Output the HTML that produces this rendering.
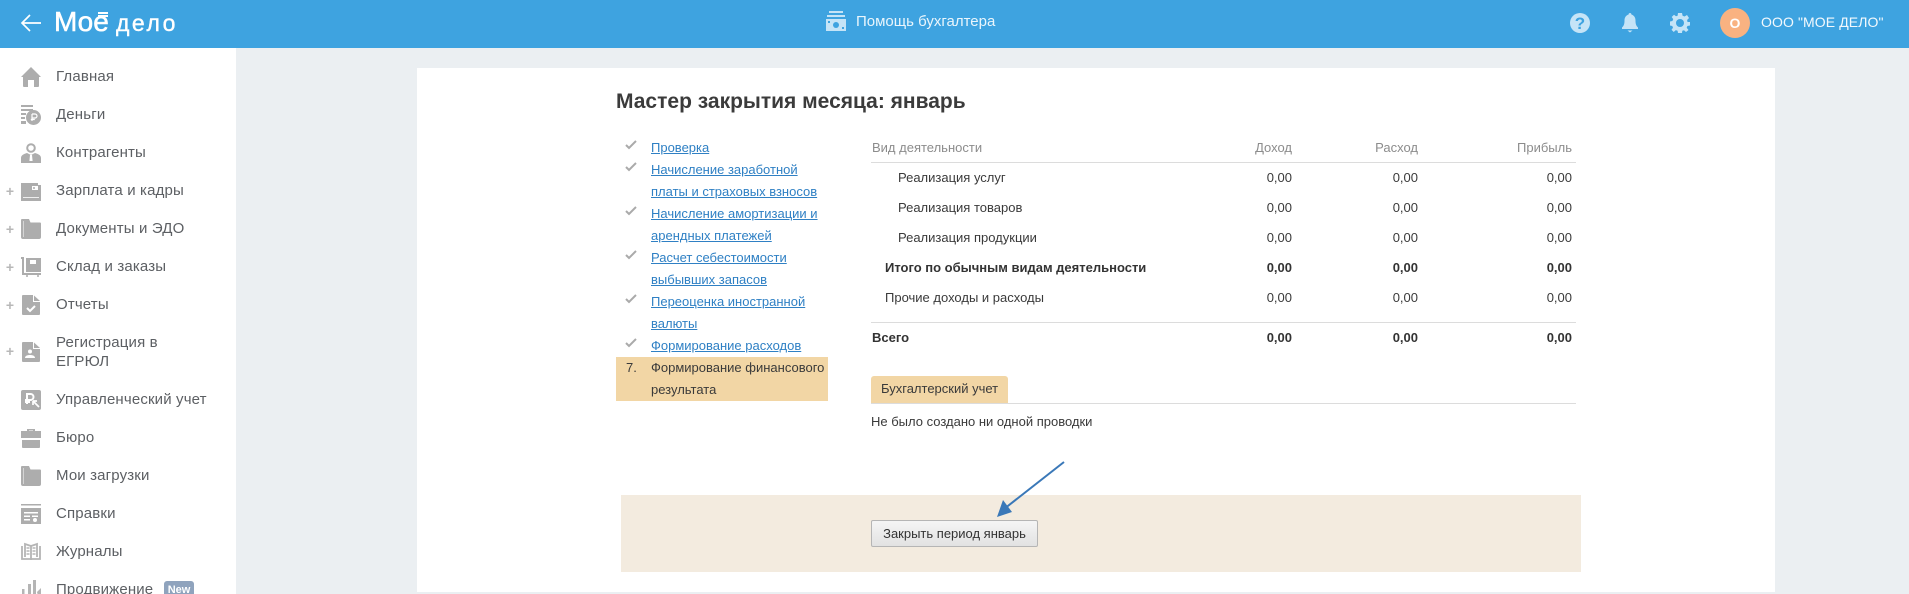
<!DOCTYPE html>
<html lang="ru"><head><meta charset="utf-8"><title>Мастер закрытия месяца</title>
<style>
html,body{margin:0;padding:0;width:1909px;height:594px;overflow:hidden}
#w{position:relative;width:1909px;height:594px;overflow:hidden;background:#ebeff2;font-family:"Liberation Sans",sans-serif;font-size:13px;color:#3a3a3a}
.a{position:absolute;white-space:nowrap}
#top{left:0;top:0;width:1909px;height:48px;background:#3ea3e0}
#side{left:0;top:48px;width:236px;height:546px;background:#fff}
#panel{left:417px;top:68px;width:1358px;height:524px;background:#fff}
.n{left:56px;font-size:15px;line-height:19px;color:#5c5f63;letter-spacing:.15px;height:19px}
.i{left:21px;width:20px;height:20px}
.p{left:4px;font-size:14px;font-weight:bold;color:#b8b8b8;line-height:16px;width:12px;height:16px;text-align:center}
.k{left:625px}
.l{left:651px;color:#2f80c4;text-decoration:underline;line-height:22px;font-size:13px}
.t{line-height:16px;height:16px}
.r{text-align:right;width:120px;line-height:16px;height:16px}
.h{color:#8c8c8c}
.b{font-weight:bold;color:#333}
.hr{background:#dcdcdc;height:1px;left:871px;width:705px}
</style></head><body><div id="w">
<div id="top" class="a"></div>
<div id="side" class="a"></div>
<div id="panel" class="a"></div>

<!-- header -->
<svg class="a" style="left:20px;top:13px" width="22" height="20" viewBox="0 0 22 20"><path d="M21 10H2M10 2L2 10l8 8" fill="none" stroke="#fff" stroke-width="1.7"/></svg>
<div class="a" style="left:54px;top:6px;font-size:28px;line-height:32px;color:#fff;-webkit-text-stroke:.5px #fff">Мое</div>
<div class="a" style="left:98px;top:12px;width:10px;height:2px;background:#fff"></div>
<div class="a" style="left:98px;top:15px;width:10px;height:2px;background:#fff"></div>
<div class="a" style="left:116px;top:9px;font-size:23px;line-height:28px;color:#fff;letter-spacing:2.500px;-webkit-text-stroke:.4px #fff">дело</div>

<svg class="a" style="left:826px;top:11px" width="20" height="20" viewBox="0 0 20 20"><rect x="3" y="0" width="14" height="2" fill="#c5e4f7"/><rect x="1" y="4" width="18" height="2" fill="#c5e4f7"/><path d="M0 8h20v12H0z" fill="#c5e4f7"/><circle cx="10" cy="14" r="3" fill="#3ea3e0"/><rect x="2" y="10" width="2" height="2" fill="#3ea3e0"/><rect x="16" y="16" width="2" height="2" fill="#3ea3e0"/></svg>
<div class="a" style="left:856px;top:13px;font-size:15px;line-height:18px;color:#e9f5fc">Помощь бухгалтера</div>

<svg class="a" style="left:1570px;top:13px" width="20" height="20" viewBox="0 0 20 20"><circle cx="10" cy="10" r="10" fill="#c5e4f7"/><text x="10" y="16" text-anchor="middle" font-family="Liberation Sans" font-size="17" font-weight="bold" fill="#3ea3e0">?</text></svg>
<svg class="a" style="left:1622px;top:13px" width="16" height="20" viewBox="0 0 16 20"><path d="M8 0c1 0 1.400.7 1.400 1.500C12 2.300 13.500 4.500 13.500 7.500c0 3.500.7 5.500 2.500 7V16H0v-1.500c1.800-1.500 2.500-3.500 2.500-7 0-3 1.500-5.200 4.100-6C6.600.7 7 0 8 0z" fill="#c5e4f7"/><path d="M5.500 17.500h5L8 19.500z" fill="#c5e4f7"/></svg>
<svg class="a" style="left:1670px;top:13px" width="20" height="20" viewBox="0 0 20 20"><path d="M8 0h4l.6 2.700 1.900.8L17 2l2 3-1.900 2 .4 2H20v3.500l-2.600.5-.7 1.800L18.500 17 16 19l-2-1.800-1.700.6L12 20H8l-.4-2.200-1.800-.7L3.700 19 1.500 16.800 3 14.800l-.7-1.800L0 12.500V8.500L2.400 8l.8-1.900L1.700 4 4 1.800l2 1.500 1.600-.6z" fill="#c5e4f7"/><circle cx="10" cy="10" r="4" fill="#3ea3e0"/></svg>
<div class="a" style="left:1720px;top:8px;width:30px;height:30px;border-radius:50%;background:#f9b281;color:#fff;font-weight:bold;font-size:14px;line-height:30px;text-align:center">О</div>
<div class="a" style="left:1761px;top:13px;font-size:14px;line-height:18px;color:#f3f9fd;letter-spacing:.1px">ООО "МОЕ ДЕЛО"</div>

<!-- sidebar -->
<div class="a n" style="top:67px">Главная</div>
<div class="a n" style="top:105px">Деньги</div>
<div class="a n" style="top:143px">Контрагенты</div>
<div class="a n" style="top:181px">Зарплата и кадры</div>
<div class="a n" style="top:219px">Документы и ЭДО</div>
<div class="a n" style="top:257px">Склад и заказы</div>
<div class="a n" style="top:295px">Отчеты</div>
<div class="a n" style="top:333px">Регистрация в</div>
<div class="a n" style="top:352px">ЕГРЮЛ</div>
<div class="a n" style="top:390px">Управленческий учет</div>
<div class="a n" style="top:428px">Бюро</div>
<div class="a n" style="top:466px">Мои загрузки</div>
<div class="a n" style="top:504px">Справки</div>
<div class="a n" style="top:542px">Журналы</div>
<div class="a n" style="top:580px">Продвижение</div>
<div class="a" style="left:164px;top:581px;width:30px;height:18px;border-radius:3px;background:#8fa3bd;color:#fff;font-size:11px;font-weight:bold;line-height:18px;text-align:center">New</div>

<div class="a p" style="top:183px">+</div>
<div class="a p" style="top:221px">+</div>
<div class="a p" style="top:259px">+</div>
<div class="a p" style="top:297px">+</div>
<div class="a p" style="top:343px">+</div>

<svg class="a i" style="top:67px" viewBox="0 0 20 20" fill="#adadad"><path d="M10 0L20 10h-2v9a1 1 0 0 1-1 1h-4v-7H7v7H3a1 1 0 0 1-1-1v-9H0z"/></svg>
<svg class="a i" style="top:105px" viewBox="0 0 20 20" fill="#adadad"><path d="M0 0h12v2H0zM0 4h12v2H0zM0 8h5v2H0zM0 12h4v2H0zM0 16h5v3H0z"/><circle cx="12.500" cy="12.500" r="7.500"/><path d="M11 9h3a2 2 0 0 1 0 4h-3M11 9v7M9.800 14.500h4" fill="none" stroke="#fff" stroke-width="1.200"/></svg>
<svg class="a i" style="top:143px" viewBox="0 0 20 20" fill="#adadad"><circle cx="10" cy="5" r="3.800" fill="none" stroke="#adadad" stroke-width="2"/><path d="M0 20v-5c0-3 3-4 6-5l4 2 4-2c3 1 6 2 6 5v5z"/><path d="M9 12h2l.6 6H8.400z" fill="#fff"/></svg>
<svg class="a i" style="top:181px" viewBox="0 0 20 20" fill="#adadad"><path d="M0 2h17v2h3v16H0z"/><path d="M2 16h16v.8H2z" fill="#fff"/><path d="M11 5h6v4h-6z" fill="#fff"/><circle cx="13" cy="7" r="1"/></svg>
<svg class="a i" style="top:219px" viewBox="0 0 20 20" fill="#adadad"><path d="M1 0h7l1.500 3.500H19a1 1 0 0 1 1 1V18a2 2 0 0 1-2 2H2a2 2 0 0 1-2-2V1a1 1 0 0 1 1-1z"/><path d="M2 2h.7v16H2z" fill="#e6e6e6"/></svg>
<svg class="a i" style="top:257px" viewBox="0 0 20 20" fill="#adadad"><path d="M0 0h3v16h17v2H1V2H0z"/><path d="M5 1h15v14H5z"/><path d="M9 3h6v4H9z" fill="#fff"/><circle cx="6" cy="19" r="1"/><circle cx="17" cy="19" r="1"/></svg>
<svg class="a i" style="top:295px" viewBox="0 0 20 20" fill="#adadad"><path d="M2 0h10v7h7v12a1 1 0 0 1-1 1H2a1 1 0 0 1-1-1V1a1 1 0 0 1 1-1z"/><path d="M13 .5L19 6h-6z"/><path d="M6 13l3 3 5-5" fill="none" stroke="#fff" stroke-width="2"/></svg>
<svg class="a i" style="top:342px" viewBox="0 0 20 20" fill="#adadad"><path d="M2 0h10v7h7v12a1 1 0 0 1-1 1H2a1 1 0 0 1-1-1V1a1 1 0 0 1 1-1z"/><path d="M13 .5L19 6h-6z"/><circle cx="9" cy="9.500" r="2" fill="#fff"/><path d="M4 16c0-2 2-3 5-3s5 1 5 3z" fill="#fff"/></svg>
<svg class="a i" style="top:390px" viewBox="0 0 20 20" fill="#adadad"><rect width="20" height="20" rx="2"/><path d="M6 14V4h3.500a3 3 0 0 1 0 6H4M4 12h5" fill="none" stroke="#fff" stroke-width="2"/><path d="M12 11l6 6M12 11h4M12 11v4" fill="none" stroke="#fff" stroke-width="1.700"/></svg>
<svg class="a i" style="top:428px" viewBox="0 0 20 20" fill="#adadad"><path d="M6 3V1h8v2h6v7H0V3zM8 2.500V3h4v-.500z"/><path d="M1 12h18v7a1 1 0 0 1-1 1H2a1 1 0 0 1-1-1z"/></svg>
<svg class="a i" style="top:466px" viewBox="0 0 20 20" fill="#adadad"><path d="M1 0h7l1.500 3.500H19a1 1 0 0 1 1 1V18a2 2 0 0 1-2 2H2a2 2 0 0 1-2-2V1a1 1 0 0 1 1-1z"/><path d="M2 2h.7v16H2z" fill="#e6e6e6"/></svg>
<svg class="a i" style="top:504px" viewBox="0 0 20 20" fill="#adadad"><path d="M0 0h20v1.500H0zM0 4h20v16H0z"/><path d="M3 8h14v1.500H3zM3 11.500h6V13H3zM3 15h6v1.500H3zM11 11.500h6V13h-6z" fill="#fff"/><circle cx="14" cy="16" r="2" fill="#fff"/></svg>
<svg class="a i" style="top:542px" viewBox="0 0 20 20" fill="none" stroke="#b5b5b5" stroke-width="1.800"><path d="M1 4v13h18V4M4 15V2l6 2 6-2v13M10 4v14"/><path d="M5.500 6h3M5.500 9h3M5.500 12h3M11.500 6h3M11.500 9h3M11.500 12h3" stroke-width="1.500"/></svg>
<svg class="a i" style="top:580px" viewBox="0 0 20 20" fill="#b5b5b5"><path d="M1 9h2.500v8H1zM7 4h3v13H7zM12 0h3v17h-3zM16 12l4-4v8h-3z"/></svg>

<!-- main -->
<div class="a" style="left:616px;top:90px;font-size:21px;line-height:24px;font-weight:bold;color:#3b3b3b">Мастер закрытия месяца: январь</div>

<svg class="a k" style="top:140px" width="12" height="10" viewBox="0 0 12 10"><path d="M1 5l3 3 7-7" fill="none" stroke="#aaa" stroke-width="2"/></svg>
<svg class="a k" style="top:162px" width="12" height="10" viewBox="0 0 12 10"><path d="M1 5l3 3 7-7" fill="none" stroke="#aaa" stroke-width="2"/></svg>
<svg class="a k" style="top:206px" width="12" height="10" viewBox="0 0 12 10"><path d="M1 5l3 3 7-7" fill="none" stroke="#aaa" stroke-width="2"/></svg>
<svg class="a k" style="top:250px" width="12" height="10" viewBox="0 0 12 10"><path d="M1 5l3 3 7-7" fill="none" stroke="#aaa" stroke-width="2"/></svg>
<svg class="a k" style="top:294px" width="12" height="10" viewBox="0 0 12 10"><path d="M1 5l3 3 7-7" fill="none" stroke="#aaa" stroke-width="2"/></svg>
<svg class="a k" style="top:338px" width="12" height="10" viewBox="0 0 12 10"><path d="M1 5l3 3 7-7" fill="none" stroke="#aaa" stroke-width="2"/></svg>

<div class="a l" style="top:137px">Проверка</div>
<div class="a l" style="top:159px">Начисление заработной</div>
<div class="a l" style="top:181px">платы и страховых взносов</div>
<div class="a l" style="top:203px">Начисление амортизации и</div>
<div class="a l" style="top:225px">арендных платежей</div>
<div class="a l" style="top:247px">Расчет себестоимости</div>
<div class="a l" style="top:269px">выбывших запасов</div>
<div class="a l" style="top:291px">Переоценка иностранной</div>
<div class="a l" style="top:313px">валюты</div>
<div class="a l" style="top:335px">Формирование расходов</div>

<div class="a" style="left:616px;top:357px;width:212px;height:44px;background:#f2d6a5"></div>
<div class="a" style="left:626px;top:357px;line-height:22px">7.</div>
<div class="a" style="left:651px;top:357px;line-height:22px">Формирование финансового</div>
<div class="a" style="left:651px;top:379px;line-height:22px">результата</div>

<!-- table -->
<div class="a t h" style="left:872px;top:140px">Вид деятельности</div>
<div class="a r h" style="left:1172px;top:140px">Доход</div>
<div class="a r h" style="left:1298px;top:140px">Расход</div>
<div class="a r h" style="left:1452px;top:140px">Прибыль</div>
<div class="a hr" style="top:162px"></div>

<div class="a t" style="left:898px;top:170px">Реализация услуг</div>
<div class="a r" style="left:1172px;top:170px">0,00</div><div class="a r" style="left:1298px;top:170px">0,00</div><div class="a r" style="left:1452px;top:170px">0,00</div>
<div class="a t" style="left:898px;top:200px">Реализация товаров</div>
<div class="a r" style="left:1172px;top:200px">0,00</div><div class="a r" style="left:1298px;top:200px">0,00</div><div class="a r" style="left:1452px;top:200px">0,00</div>
<div class="a t" style="left:898px;top:230px">Реализация продукции</div>
<div class="a r" style="left:1172px;top:230px">0,00</div><div class="a r" style="left:1298px;top:230px">0,00</div><div class="a r" style="left:1452px;top:230px">0,00</div>
<div class="a t b" style="left:885px;top:260px">Итого по обычным видам деятельности</div>
<div class="a r b" style="left:1172px;top:260px">0,00</div><div class="a r b" style="left:1298px;top:260px">0,00</div><div class="a r b" style="left:1452px;top:260px">0,00</div>
<div class="a t" style="left:885px;top:290px">Прочие доходы и расходы</div>
<div class="a r" style="left:1172px;top:290px">0,00</div><div class="a r" style="left:1298px;top:290px">0,00</div><div class="a r" style="left:1452px;top:290px">0,00</div>
<div class="a hr" style="top:322px"></div>
<div class="a t b" style="left:872px;top:330px">Всего</div>
<div class="a r b" style="left:1172px;top:330px">0,00</div><div class="a r b" style="left:1298px;top:330px">0,00</div><div class="a r b" style="left:1452px;top:330px">0,00</div>

<div class="a" style="left:871px;top:376px;width:137px;height:27px;background:#f2d6a5;border-radius:3px 3px 0 0"></div>
<div class="a" style="left:881px;top:381px;line-height:16px">Бухгалтерский учет</div>
<div class="a hr" style="top:403px"></div>
<div class="a" style="left:871px;top:414px;line-height:16px">Не было создано ни одной проводки</div>

<div class="a" style="left:621px;top:495px;width:960px;height:77px;background:#f3ebdf"></div>
<div class="a" style="left:871px;top:520px;width:165px;height:25px;border:1px solid #b5b5b5;border-radius:2px;background:linear-gradient(#f5f5f5,#e2e2e2);color:#333;line-height:25px;text-align:center">Закрыть период январь</div>

<svg class="a" style="left:990px;top:455px" width="80" height="70" viewBox="0 0 80 70"><path d="M74 7L14 54" stroke="#3a78b8" stroke-width="2" fill="none"/><path d="M7 62l6-17 9 12z" fill="#3a78b8"/></svg>
</div></body></html>
